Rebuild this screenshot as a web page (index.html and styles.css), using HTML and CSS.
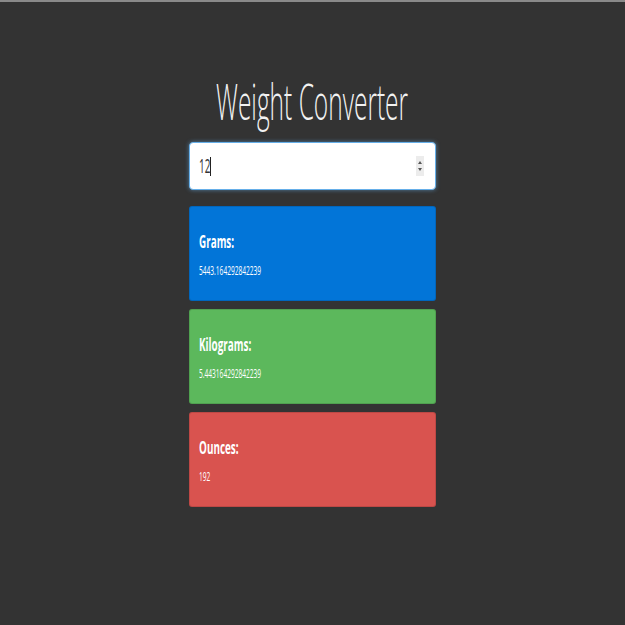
FILE: index.html
```html
<!DOCTYPE html>
<html>
<head>
<meta charset="utf-8">
<link rel="stylesheet" href="styles.css">
</head>
<body>
<div class="topline"></div>
<main class="container">
  <h1 class="title"><span class="sq-c">Weight Converter</span></h1>
  <div class="field">
    <span class="sq value-in">12</span><span class="caret"></span>
    <div class="spin"><span class="up"></span><span class="down"></span></div>
  </div>
  <section class="card blue">
    <h4 class="card-h"><span class="sq">Grams:</span></h4>
    <div class="card-v"><span class="sq">5443.164292842239</span></div>
  </section>
  <section class="card green">
    <h4 class="card-h"><span class="sq">Kilograms:</span></h4>
    <div class="card-v"><span class="sq">5.443164292842239</span></div>
  </section>
  <section class="card red">
    <h4 class="card-h"><span class="sq">Ounces:</span></h4>
    <div class="card-v"><span class="sq">192</span></div>
  </section>
</main>
</body>
</html>
```
FILE: styles.css
```css
html, body { margin: 0; padding: 0; }
body {
  background: #333333;
  font-family: "Open Sans", "DejaVu Sans", sans-serif;
  color: #fff;
  height: 625px;
  overflow: hidden;
}
.topline { height: 2px; background: #8a8a8a; }
.container {
  width: 247px;
  margin: 0 auto;
  padding-top: 69px;
}
.title {
  margin: 0;
  font-weight: 300;
  font-size: 49px;
  line-height: 60px;
  height: 60px;
  display: flex;
  justify-content: center;
  white-space: nowrap;
  color: #f2f2f2;
}
.sq-c { display: inline-block; flex: none; transform: scaleX(0.5); transform-origin: center; }
.sq { display: inline-block; transform: scaleX(0.55); transform-origin: left center; white-space: nowrap; }
.field {
  margin-top: 11px;
  height: 48px;
  box-sizing: border-box;
  background: #fff;
  border: 1px solid #66afe9;
  border-radius: 4px;
  box-shadow: 0 0 4px rgba(102,175,233,0.6);
  display: flex;
  align-items: center;
  padding-left: 9px;
  position: relative;
  color: #333;
}
.value-in { font-size: 20px; line-height: 24px; width: 11px; transform: scaleX(0.5); }
.caret { width: 1px; height: 19px; background: #222; }
.spin {
  position: absolute;
  right: 11px;
  top: 13px;
  width: 8px;
  height: 20px;
  background: #ececec;
  display: flex;
  flex-direction: column;
  align-items: center;
  justify-content: center;
  gap: 4px;
}
.up, .down { width: 0; height: 0; border-left: 2.5px solid transparent; border-right: 2.5px solid transparent; }
.up { border-bottom: 3px solid #555; }
.down { border-top: 3px solid #555; }
.card {
  margin-top: 16px;
  height: 95px;
  box-sizing: border-box;
  border-radius: 3px;
  padding: 22px 9px 0 9px;
  border: 1px solid rgba(0,0,0,0.12);
}
.card + .card { margin-top: 8px; }
.blue { background: #0275d8; }
.green { background: #5cb85c; }
.red { background: #d9534f; }
.card-h {
  margin: 0;
  font-size: 18px;
  font-weight: 700;
  line-height: 24px;
  height: 24px;
}
.card-v {
  margin-top: 9px;
  font-size: 12px;
  line-height: 17px;
}
```
